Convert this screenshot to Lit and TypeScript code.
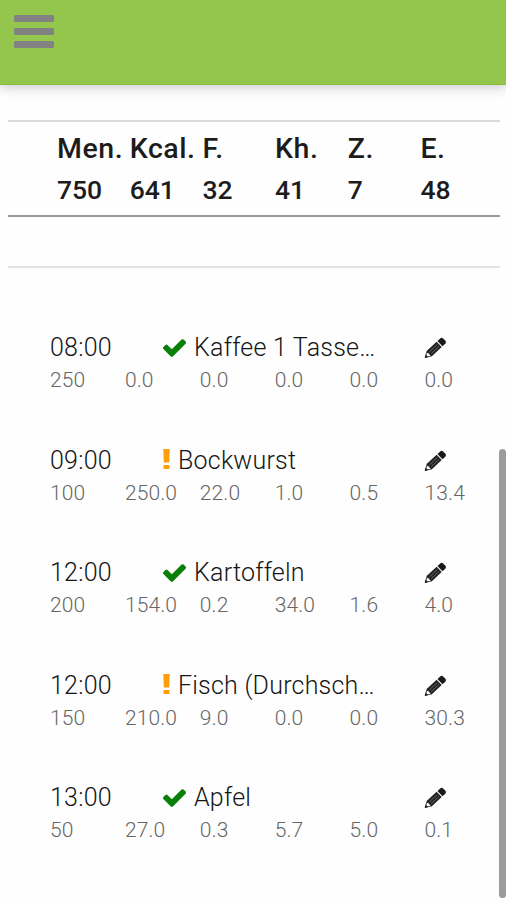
import { LitElement, html, css, svg } from "lit";
import { customElement, property } from "lit/decorators.js";

type Status = "ok" | "warn";

interface Meal {
  time: string;
  status: Status;
  name: string;
  values: string[];
}

const TOTALS: [string, string][] = [
  ["Men.", "750"],
  ["Kcal.", "641"],
  ["F.", "32"],
  ["Kh.", "41"],
  ["Z.", "7"],
  ["E.", "48"],
];

const MEALS: Meal[] = [
  { time: "08:00", status: "ok", name: "Kaffee 1 Tasse…", values: ["250", "0.0", "0.0", "0.0", "0.0", "0.0"] },
  { time: "09:00", status: "warn", name: "Bockwurst", values: ["100", "250.0", "22.0", "1.0", "0.5", "13.4"] },
  { time: "12:00", status: "ok", name: "Kartoffeln", values: ["200", "154.0", "0.2", "34.0", "1.6", "4.0"] },
  { time: "12:00", status: "warn", name: "Fisch (Durchsch…", values: ["150", "210.0", "9.0", "0.0", "0.0", "30.3"] },
  { time: "13:00", status: "ok", name: "Apfel", values: ["50", "27.0", "0.3", "5.7", "5.0", "0.1"] },
];

@customElement("meal-entry")
export class MealEntry extends LitElement {
  @property({ attribute: false }) meal!: Meal;

  static styles = css`
    :host {
      display: block;
      height: 112.5px;
    }
    .head {
      display: grid;
      grid-template-columns: 113px 261px 1fr;
      height: 34px;
      align-items: center;
      font-size: 25px;
      line-height: 34px;
      color: #151515;
      font-weight: 350;
      letter-spacing: 0.22px;
    }
    .title {
      display: flex;
      align-items: center;
      white-space: nowrap;
    }
    .check {
      width: 23px;
      height: 18px;
      margin-right: 8px;
      fill: #087f08;
    }
    .bang {
      width: 7px;
      height: 20px;
      margin: -3px 8px 0 0;
      fill: #ff9d0a;
    }
    .pencil {
      width: 23px;
      height: 22px;
      display: block;
    }
    .values {
      display: grid;
      grid-template-columns: repeat(6, 74.9px);
      font-size: 21px;
      font-weight: 350;
      line-height: 30px;
      height: 30px;
      color: #666;
      letter-spacing: 0.12px;
    }
  `;

  private icon() {
    return this.meal.status === "ok"
      ? html`<svg class="check" viewBox="121 334 1550 1188">
          ${svg`<path d="M1671 566q0 40-28 68l-724 724-136 136q-28 28-68 28t-68-28l-136-136-362-362q-28-28-28-68t28-68l136-136q28-28 68-28t68 28l294 295 656-657q28-28 68-28t68 28l136 136q28 28 28 68z"/>`}
        </svg>`
      : html`<svg class="bang" viewBox="0 0 7 20">
          ${svg`<path d="M.3 0H6.7L6.2 13.5H.8zM.5 16H6.5V20H.5z"/>`}
        </svg>`;
  }

  render() {
    return html`
      <div class="head">
        <span>${this.meal.time}</span>
        <span class="title">${this.icon()}<span>${this.meal.name}</span></span>
        <svg class="pencil" viewBox="0 0 23 22">
          <g transform="translate(.9 20.7) rotate(-43) scale(.96 .9)">
            <path d="M.4 0L6.4-3.6V3.6z" fill="#fff" stroke="#333" stroke-width="1" stroke-linejoin="round" />
            <path d="M0 0L3-2V2z" fill="#222" />
            <path d="M6-4.1H20.3V4.1H6z" fill="#222" />
            <path d="M7.5-1.3H19M7.5 1.5H19" stroke="#777" stroke-width=".8" />
            <path d="M21.5-4.1H25Q27.6-4.1 27.6-1.5V1.5Q27.6 4.1 25 4.1H21.5z" fill="#1a1a1a" />
          </g>
        </svg>
      </div>
      <div class="values">${this.meal.values.map((v) => html`<span>${v}</span>`)}</div>
    `;
  }
}

@customElement("app-root")
export class AppRoot extends LitElement {
  static styles = css`
    :host {
      display: block;
      position: relative;
      height: 900px;
      overflow: hidden;
      background: #fefefe;
      font-family: Roboto, "Liberation Sans", sans-serif;
    }
    .bar {
      box-sizing: border-box;
      height: 85px;
      padding: 15px 14.4px;
      background: #94c64d;
      border-bottom: 1px solid #8cbc35;
      box-shadow: 0 3px 10px rgba(60, 50, 80, 0.24);
    }
    .menu {
      display: flex;
      flex-direction: column;
      gap: 6.4px;
      width: 40px;
    }
    .menu i {
      height: 6.8px;
      border-radius: 1.5px;
      background: #828282;
    }
    .totals {
      margin: 35px 6px 0 8px;
      box-sizing: border-box;
      height: 97px;
      padding: 6px 0 0 49px;
      border-top: 2px solid #dadada;
      border-bottom: 2px solid #999;
      display: grid;
      grid-template-columns: repeat(6, 72.7px);
      align-content: start;
      font-weight: 500;
      color: #1c1c1c;
      white-space: nowrap;
    }
    .col {
      display: flex;
      flex-direction: column;
    }
    .label {
      font-size: 28.5px;
      line-height: 41px;
      letter-spacing: 0.55px;
    }
    .sum {
      font-size: 26.5px;
      line-height: 41px;
    }
    .rule {
      margin: 49px 6px 0 8px;
      height: 2px;
      background: #e3e3e3;
    }
    .list {
      padding: 63px 0 0 50px;
    }
    .scroll {
      position: absolute;
      right: 0;
      top: 449px;
      width: 7px;
      height: 449px;
      border-radius: 4px;
      background: #9c9c9c;
    }
  `;

  render() {
    return html`
      <div class="bar"><div class="menu"><i></i><i></i><i></i></div></div>
      <div class="totals">
        ${TOTALS.map(([k, v]) => html`<div class="col"><span class="label">${k}</span><span class="sum">${v}</span></div>`)}
      </div>
      <div class="rule"></div>
      <div class="list">${MEALS.map((m) => html`<meal-entry .meal=${m}></meal-entry>`)}</div>
      <div class="scroll"></div>
    `;
  }
}
